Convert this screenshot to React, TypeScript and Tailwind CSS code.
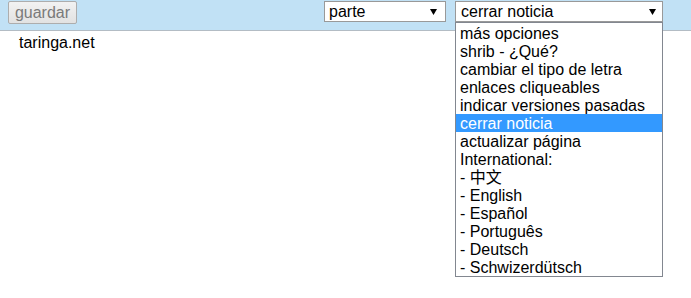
import React from "react";

const items = [
  "más opciones",
  "shrib - ¿Qué?",
  "cambiar el tipo de letra",
  "enlaces cliqueables",
  "indicar versiones pasadas",
  "cerrar noticia",
  "actualizar página",
  "International:",
  "- 中文",
  "- English",
  "- Español",
  "- Português",
  "- Deutsch",
  "- Schwizerdütsch",
];

function Arrow() {
  return (
    <svg width="7" height="6" viewBox="0 0 7 6" className="shrink-0">
      <path d="M0 0 H7 L3.5 6 Z" fill="#000" />
    </svg>
  );
}

export default function App() {
  return (
    <div
      className="w-[691px] h-[298px] bg-white text-[16px] text-black"
      style={{ fontFamily: '"Liberation Sans", Arial, "Noto Sans CJK SC", sans-serif' }}
    >
      {/* Toolbar */}
      <div className="flex items-start h-[31px] bg-[#c1e1f5] border-b border-[#b3bcc4] pl-2 pt-px">
        <button className="w-[69px] h-[23px] rounded-[2px] border border-[#adadad] bg-gradient-to-b from-[#f2f2f2] to-[#e2e2e2] text-[#7a7a7a] leading-[20px]">
          guardar
        </button>

        <div className="ml-[247px] w-[122px] h-[21px] flex items-center justify-between bg-white border border-[#999] pl-1 pr-2 leading-[19px]">
          <span>parte</span>
          <Arrow />
        </div>

        <div className="relative ml-[9px] w-[208px]">
          <div className="h-[21px] flex items-center justify-between bg-white border border-[#999] pl-[5px] pr-[6px] leading-[19px]">
            <span>cerrar noticia</span>
            <Arrow />
          </div>
          {/* open dropdown list */}
          <ul className="absolute top-[21px] left-0 w-[208px] bg-white border border-[#828790] pt-px">
            {items.map((t) => (
              <li
                key={t}
                className={`h-[18px] leading-[19px] pl-[4px] whitespace-nowrap ${
                  t === "cerrar noticia" ? "bg-[#3399ff] text-white" : ""
                }`}
              >
                {t}
              </li>
            ))}
          </ul>
        </div>
      </div>

      <div className="pl-[19px] pt-[3px] leading-[18px]">taringa.net</div>
    </div>
  );
}
